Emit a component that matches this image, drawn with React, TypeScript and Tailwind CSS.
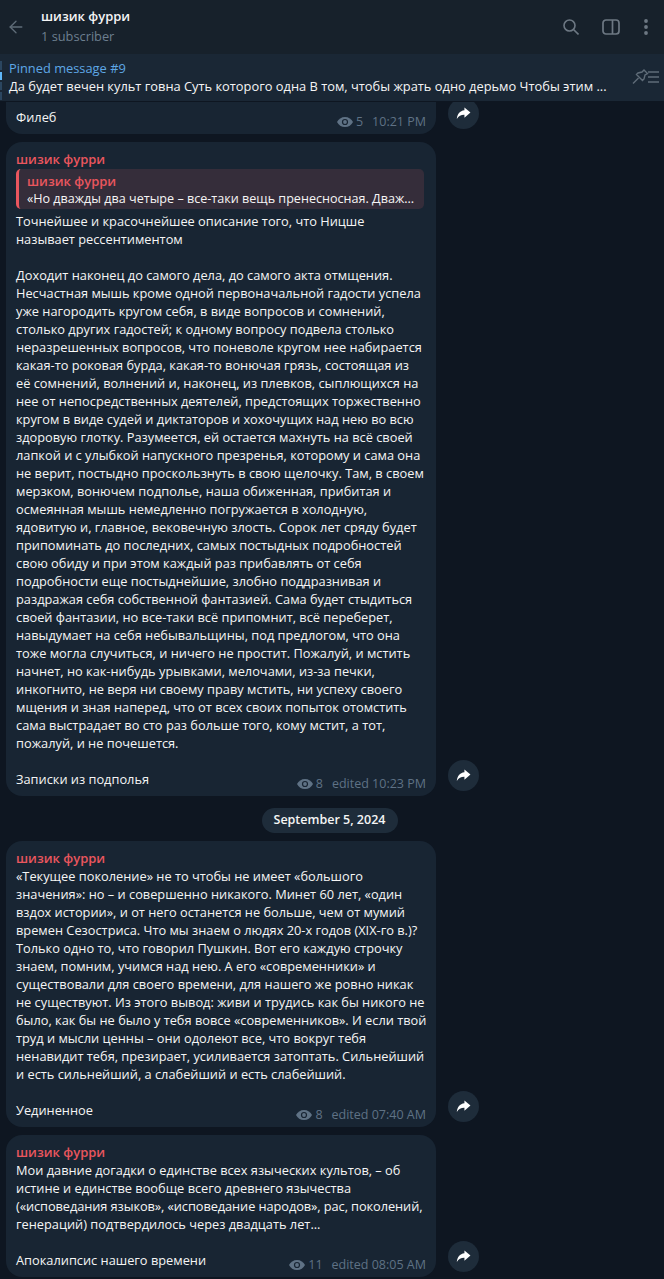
import React from 'react';
import { ArrowLeft } from 'lucide-react';

const FONT = "font-['Open_Sans','Noto_Sans',sans-serif]";

const EyeIcon = () => (
  <svg viewBox="0 0 16 10" className="w-[16px] h-[10px] mr-[3px]">
    <path
      d="M8 0C4.4 0 1.5 2 0 5c1.5 3 4.4 5 8 5s6.500-2 8-5c-1.500-3-4.400-5-8-5z"
      fill="#5f7285"
    />
    <circle cx="8" cy="5" r="3.100" fill="#182533" />
    <circle cx="8" cy="5" r="1.900" fill="#5f7285" />
  </svg>
);

const Meta = ({ views, time, edited }: { views: number; time: string; edited?: boolean }) => (
  <div className="flex items-center text-[12.5px] leading-[18px] text-[#5f7285]">
    <EyeIcon />
    <span>{views}</span>
    <span className="ml-[9px]">{edited ? `edited ${time}` : time}</span>
  </div>
);

const ShareButton = () => (
  <div className="w-[31px] h-[31px] rounded-full bg-[#1e2c3a] flex items-center justify-center shrink-0">
    <svg viewBox="0 0 16 14" className="w-[15px] h-[13px]" fill="#ffffff">
      <path d="M9 0.5 L15.5 6 L9 11.500 V8.400 C5.500 8.300 2.800 9.600 0.800 12.800 C1.200 7.800 4 4 9 3.500 Z" />
    </svg>
  </div>
);

const Lines = ({ lines, tight = -1 }: { lines: string[]; tight?: number }) => (
  <div className="text-[12.8px] leading-[18px] text-[#f5f5f5]">
    {lines.map((line, i) => (
      <div key={i} className={`h-[18px] whitespace-nowrap ${i === tight ? 'tracking-[-0.08px]' : ''}`}>
        {line}
      </div>
    ))}
  </div>
);

const Bubble = ({
  children,
  source,
  views,
  time,
  edited = true,
  className = '',
}: {
  children: React.ReactNode;
  source: string;
  views: number;
  time: string;
  edited?: boolean;
  className?: string;
}) => (
  <div className={`flex items-end ${className}`}>
    <div className="w-[430px] ml-[6px] bg-[#182533] rounded-[16px] px-[10px] shrink-0">
      {children}
      <div className="flex justify-between items-start h-[26px] mt-[18px]">
        <span className="text-[12.8px] leading-[18px] text-[#f5f5f5]">{source}</span>
        <div className="mt-[5px]">
          <Meta views={views} time={time} edited={edited} />
        </div>
      </div>
    </div>
    <div className="ml-[12px] mb-[5px]">
      <ShareButton />
    </div>
  </div>
);

const Name = () => <div className="text-[13px] leading-[18px] font-semibold text-[#e9565e]">шизик фурри</div>;

const msg2 = [
  'Доходит наконец до самого дела, до самого акта отмщения.',
  'Несчастная мышь кроме одной первоначальной гадости успела',
  'уже нагородить кругом себя, в виде вопросов и сомнений,',
  'столько других гадостей; к одному вопросу подвела столько',
  'неразрешенных вопросов, что поневоле кругом нее набирается',
  'какая-то роковая бурда, какая-то вонючая грязь, состоящая из',
  'её сомнений, волнений и, наконец, из плевков, сыплющихся на',
  'нее от непосредственных деятелей, предстоящих торжественно',
  'кругом в виде судей и диктаторов и хохочущих над нею во всю',
  'здоровую глотку. Разумеется, ей остается махнуть на всё своей',
  'лапкой и с улыбкой напускного презренья, которому и сама она',
  'не верит, постыдно проскользнуть в свою щелочку. Там, в своем',
  'мерзком, вонючем подполье, наша обиженная, прибитая и',
  'осмеянная мышь немедленно погружается в холодную,',
  'ядовитую и, главное, вековечную злость. Сорок лет сряду будет',
  'припоминать до последних, самых постыдных подробностей',
  'свою обиду и при этом каждый раз прибавлять от себя',
  'подробности еще постыднейшие, злобно поддразнивая и',
  'раздражая себя собственной фантазией. Сама будет стыдиться',
  'своей фантазии, но все-таки всё припомнит, всё переберет,',
  'навыдумает на себя небывальщины, под предлогом, что она',
  'тоже могла случиться, и ничего не простит. Пожалуй, и мстить',
  'начнет, но как-нибудь урывками, мелочами, из-за печки,',
  'инкогнито, не веря ни своему праву мстить, ни успеху своего',
  'мщения и зная наперед, что от всех своих попыток отомстить',
  'сама выстрадает во сто раз больше того, кому мстит, а тот,',
  'пожалуй, и не почешется.',
];

const msg3 = [
  '«Текущее поколение» не то чтобы не имеет «большого',
  'значения»: но – и совершенно никакого. Минет 60 лет, «один',
  'вздох истории», и от него останется не больше, чем от мумий',
  'времен Сезостриса. Что мы знаем о людях 20-х годов (XIX-го в.)?',
  'Только одно то, что говорил Пушкин. Вот его каждую строчку',
  'знаем, помним, учимся над нею. А его «современники» и',
  'существовали для своего времени, для нашего же ровно никак',
  'не существуют. Из этого вывод: живи и трудись как бы никого не',
  'было, как бы не было у тебя вовсе «современников». И если твой',
  'труд и мысли ценны – они одолеют все, что вокруг тебя',
  'ненавидит тебя, презирает, усиливается затоптать. Сильнейший',
  'и есть сильнейший, а слабейший и есть слабейший.',
];

const msg4 = [
  'Мои давние догадки о единстве всех языческих культов, – об',
  'истине и единстве вообще всего древнего язычества',
  '(«исповедания языков», «исповедание народов», рас, поколений,',
  'генераций) подтвердилось через двадцать лет...',
];

export default function App() {
  return (
    <div className={`w-[664px] h-[1279px] bg-[#0e1621] overflow-hidden flex flex-col ${FONT}`}>
      {/* Header */}
      <div className="h-[54px] bg-[#17212b] flex items-center shrink-0">
        <ArrowLeft className="w-[20px] h-[20px] ml-[6px] text-[#5f6c78]" strokeWidth={1.6} />
        <div className="ml-[15px] flex-1 pb-[2px]">
          <div className="text-[13px] leading-[18px] font-semibold text-[#f5f5f5]">шизик фурри</div>
          <div className="text-[12.8px] leading-[18px] mt-[2px] text-[#6d7f8f]">1 subscriber</div>
        </div>
        <svg viewBox="0 0 16 16" className="w-[16px] h-[16px]" fill="none" stroke="#6d7883" strokeWidth="1.6">
          <circle cx="6.500" cy="6.500" r="5.500" />
          <path d="M10.500 10.500L15.500 15.500" />
        </svg>
        <svg viewBox="0 0 18 16" className="w-[18px] h-[16px] ml-[23px]" fill="none" stroke="#6d7883" strokeWidth="1.700">
          <rect x="1" y="1" width="16" height="14" rx="3" />
          <path d="M10.500 1v14" />
        </svg>
        <svg viewBox="0 0 4 16" className="w-[4px] h-[16px] ml-[24px] mr-[16px]" fill="#6d7883">
          <circle cx="2" cy="2" r="1.900" />
          <circle cx="2" cy="8" r="1.900" />
          <circle cx="2" cy="14" r="1.900" />
        </svg>
      </div>

      {/* Pinned bar */}
      <div className="h-[48px] bg-[#1a2735] flex items-center shrink-0 relative border-b border-[#0e1621]">
        <div className="absolute left-0 top-0 w-[2px] h-[48px] flex flex-col gap-[2px] pt-[7px]">
          <div className="h-[9px] bg-[#2b4660]" />
          <div className="h-[8px] bg-[#5eb5f7]" />
          <div className="h-[8px] bg-[#2b4660]" />
          <div className="h-[8px] bg-[#2b4660]" />
        </div>
        <div className="ml-[9px] flex-1 min-w-0 pb-[2px]">
          <div className="text-[12.85px] leading-[18px] text-[#5ea7e6]">Pinned message #9</div>
          <div className="text-[12.85px] leading-[18px] text-[#f5f5f5] whitespace-nowrap">
            Да будет вечен культ говна Суть которого одна В том, чтобы жрать одно дерьмо Чтобы этим ...
          </div>
        </div>
        <svg viewBox="0 0 27 15" className="w-[27px] h-[15px] mr-[5px] mb-[2px]" fill="none" stroke="#5f6c78" strokeWidth="1.400">
          <path d="M12 1l3.500 3.500-2.500 1.500-1 4-1.500 1.500-6-6 1.500-1.500 4-1z" />
          <path d="M6.500 9L1 14.500" />
          <path d="M16 3h11M16 8h11M16 13h11" />
        </svg>
      </div>

      {/* Messages */}
      <div className="flex flex-col">
        <div className="flex items-start h-[32px]">
          <div className="w-[430px] h-[32px] ml-[6px] bg-[#182533] rounded-b-[16px] px-[10px] flex justify-between items-start shrink-0">
            <span className="text-[12.8px] leading-[18px] mt-[6px] text-[#f5f5f5]">Филеб</span>
            <div className="mt-[11px]">
              <Meta views={5} time="10:21 PM" />
            </div>
          </div>
          <div className="ml-[12px] -mt-[4px]">
            <ShareButton />
          </div>
        </div>

        <Bubble className="mt-[8px]" source="Записки из подполья" views={8} time="10:23 PM">
          <div className="pt-[8px]">
            <Name />
          </div>
          <div className="h-[40px] mt-[1px] mr-[2px] bg-[#352d3a] rounded-[5px] border-l-[3px] border-[#e9565e] pl-[8px] pr-[6px]">
            <div className="text-[13px] leading-[18px] pt-[3px] font-semibold text-[#e9565e]">шизик фурри</div>
            <div className="text-[12.6px] leading-[18px] text-[#f5f5f5] whitespace-nowrap">
              «Но дважды два четыре – все-таки вещь пренесносная. Дваж...
            </div>
          </div>
          <div className="mt-[3px]">
            <Lines lines={['Точнейшее и красочнейшее описание того, что Ницше', 'называет рессентиментом']} />
          </div>
          <div className="mt-[18px]">
            <Lines lines={msg2} />
          </div>
        </Bubble>

        <div className="flex justify-center mt-[12px] mb-[8px]">
          <div className="h-[25px] w-[136px] rounded-full bg-[#1e2c3a] flex items-center justify-center text-[12.5px] font-semibold text-[#f5f5f5] ml-[-5px]">
            September 5, 2024
          </div>
        </div>

        <Bubble source="Уединенное" views={8} time="07:40 AM">
          <div className="pt-[8px]">
            <Name />
          </div>
          <Lines lines={msg3} />
        </Bubble>

        <Bubble className="mt-[8px]" source="Апокалипсис нашего времени" views={11} time="08:05 AM">
          <div className="pt-[8px]">
            <Name />
          </div>
          <Lines lines={msg4} tight={2} />
        </Bubble>
      </div>
    </div>
  );
}
